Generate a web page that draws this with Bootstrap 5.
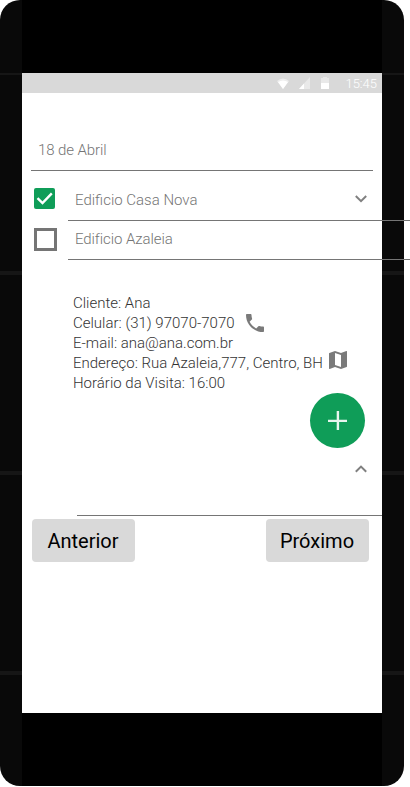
<!DOCTYPE html>
<html lang="pt-BR">
<head>
<meta charset="utf-8">
<meta name="viewport" content="width=device-width, initial-scale=1">
<title>Visitas</title>
<link href="https://cdn.jsdelivr.net/npm/bootstrap@5.3.0/dist/css/bootstrap.min.css" rel="stylesheet">
<style>
html, body { height: 787px; overflow: hidden; }
body { font-family: Roboto, "Liberation Sans", sans-serif; font-weight: 300; font-size: 15px; line-height: 20px; background: #fff; }
svg { display: block; flex: none; }
.phone { width: 404px; height: 786px; padding: 0 22px; border-radius: 20px;
  background:
    linear-gradient(#000, #000) 22px 0 / 360px 100% no-repeat,
    linear-gradient(#161616, #161616) 0 73px / 100% 2px no-repeat,
    linear-gradient(#161616, #161616) 0 271px / 100% 4px no-repeat,
    linear-gradient(#161616, #161616) 0 471px / 100% 4px no-repeat,
    linear-gradient(#161616, #161616) 0 671px / 100% 4px no-repeat,
    #090909; }
.bezel { height: 73px; }
.screen { width: 360px; height: 640px; }
.status { height: 20px; background: #d9d9d9; color: #fff; font-size: 13px; padding-right: 5px; }
.status-time { padding-top: 1px; }
.date-field { height: 78px; margin: 0 9px; padding: 0 7px 10px; border-bottom: 1px solid #757575; color: #757575; letter-spacing: -.1px; }
.item-row { width: 388px; padding-left: 9px; color: #757575; }
.item-line { width: 342px; border-bottom: 1px solid #757575; padding-left: 7px; }
.check-cell { width: 37px; }
.first-row { height: 50px; }
.first-row .check-cell { padding: 17px 0 0 3px; }
.first-row .item-line { padding-top: 9px; }
.first-row .chev { margin: 0 43px 3px 0; }
.second-row { height: 39px; }
.second-row .check-cell { padding: 7px 0 0 3px; }
.second-row .item-line { padding-bottom: 2px; letter-spacing: -.08px; }
.details { height: 133px; padding: 33px 0 0 51px; color: #333; white-space: nowrap; }
.detail-line { height: 20px; }
.phone-icon { margin-left: 11px; }
.map-icon { margin: -2px 0 0 6px; }
.fab { width: 55px; height: 55px; background: #0f9d58; margin-right: 17px; }
.collapse-row { height: 68px; margin-left: 55px; padding: 17px 15px 0 0; border-bottom: 1px solid #757575; }
.actions { padding: 3px 13px 0 10px; }
.nav-btn { width: 103px; height: 43px; padding: 0 1px 0 0; border: 0; border-radius: 4px; background: #d9d9d9; color: #000; font-size: 20px; }
.nav-btn:hover { background: #cfcfcf; }
</style>
<script src="https://cdn.jsdelivr.net/npm/bootstrap@5.3.0/dist/js/bootstrap.bundle.min.js" defer></script>
</head>
<body>
<main class="phone">
  <div class="bezel"></div>
  <div class="screen bg-white d-flex flex-column">
    <header class="status d-flex align-items-center justify-content-end">
      <svg width="12" height="11" viewBox="0 0 12 11"><path fill="#ededed" d="M0 3Q6-2 12 3L6 11Z"/><path fill="#fff" d="M1 4Q6 1 11 4L6 11Z"/></svg>
      <svg class="ms-2 me-2" width="16" height="12" viewBox="0 0 16 12"><path fill="#e9e9e9" d="M13 0V12H2Z"/><path fill="#fff" d="M7 6.5V12H2Z"/></svg>
      <svg width="8" height="12" viewBox="0 0 8 12"><path fill="#e9e9e9" d="M2 0H6V1H8V6H0V1H2Z"/><path fill="#fff" d="M0 6H8V12H0Z"/></svg>
      <span class="status-time ms-3">15:45</span>
    </header>
    <div class="date-field d-flex align-items-end"><span>18 de Abril</span></div>
    <div class="item-row first-row d-flex">
      <div class="check-cell"><svg width="21" height="21" viewBox="0 0 21 21"><rect width="21" height="21" rx="2" fill="#0f9d58"/><path d="M3.5 10.2 8.5 15 17.8 5.3" fill="none" stroke="#fff" stroke-width="2.4"/></svg></div>
      <div class="item-line d-flex align-items-center justify-content-between"><span>Edificio Casa Nova</span>
        <svg class="chev" width="12" height="8" viewBox="0 0 12 8"><path d="M.8 1 6 6.2 11.2 1" fill="none" stroke="#808080" stroke-width="2"/></svg></div>
    </div>
    <div class="item-row second-row d-flex">
      <div class="check-cell"><svg width="23" height="23" viewBox="0 0 23 23"><rect x="1.5" y="1.5" width="20" height="20" fill="none" stroke="#757575" stroke-width="3"/></svg></div>
      <div class="item-line d-flex align-items-center"><span>Edificio Azaleia</span></div>
    </div>
    <section class="details">
      <div class="detail-line">Cliente: Ana</div>
      <div class="detail-line d-flex align-items-center"><span>Celular: (31) 97070-7070</span>
        <svg class="phone-icon" width="18" height="18" viewBox="3 3 18 18"><path fill="#7a7a7a" d="M6.62 10.79c1.44 2.83 3.76 5.14 6.59 6.59l2.2-2.2c.27-.27.67-.36 1.02-.24 1.12.37 2.33.57 3.57.57.55 0 1 .45 1 1V20c0 .55-.45 1-1 1-9.39 0-17-7.61-17-17 0-.55.45-1 1-1h3.5c.55 0 1 .45 1 1 0 1.25.2 2.45.57 3.57.11.35.03.74-.25 1.02z"/></svg></div>
      <div class="detail-line">E-mail: ana@ana.com.br</div>
      <div class="detail-line d-flex"><span>Endereço: Rua Azaleia,777, Centro, BH</span>
        <svg class="map-icon" width="18" height="18" viewBox="3 3 18 18"><path fill="#7a7a7a" d="m20.5 3-.16.03L15 5.1 9 3 3.36 4.9c-.21.07-.36.25-.36.48V20.5c0 .28.22.5.5.5l.16-.03L9 18.9l6 2.1 5.64-1.9c.21-.07.36-.25.36-.48V3.5c0-.28-.22-.5-.5-.5zM15 19l-6-2.11V5l6 2.11V19z"/></svg></div>
      <div class="detail-line">Horário da Visita: 16:00</div>
    </section>
    <div class="fab rounded-circle align-self-end d-flex align-items-center justify-content-center"><svg width="19" height="19" viewBox="0 0 19 19"><path d="M9.9 0V19M0 9.9H19" stroke="#e7f5ee" stroke-width="2.4"/></svg></div>
    <div class="collapse-row d-flex justify-content-end align-items-start"><svg width="12" height="8" viewBox="0 0 12 8"><path d="M.8 6.8 6 1.6 11.2 6.8" fill="none" stroke="#808080" stroke-width="2"/></svg></div>
    <div class="actions d-flex justify-content-between"><button type="button" class="btn nav-btn">Anterior</button><button type="button" class="btn nav-btn">Próximo</button></div>
  </div>
</main>
</body>
</html>
